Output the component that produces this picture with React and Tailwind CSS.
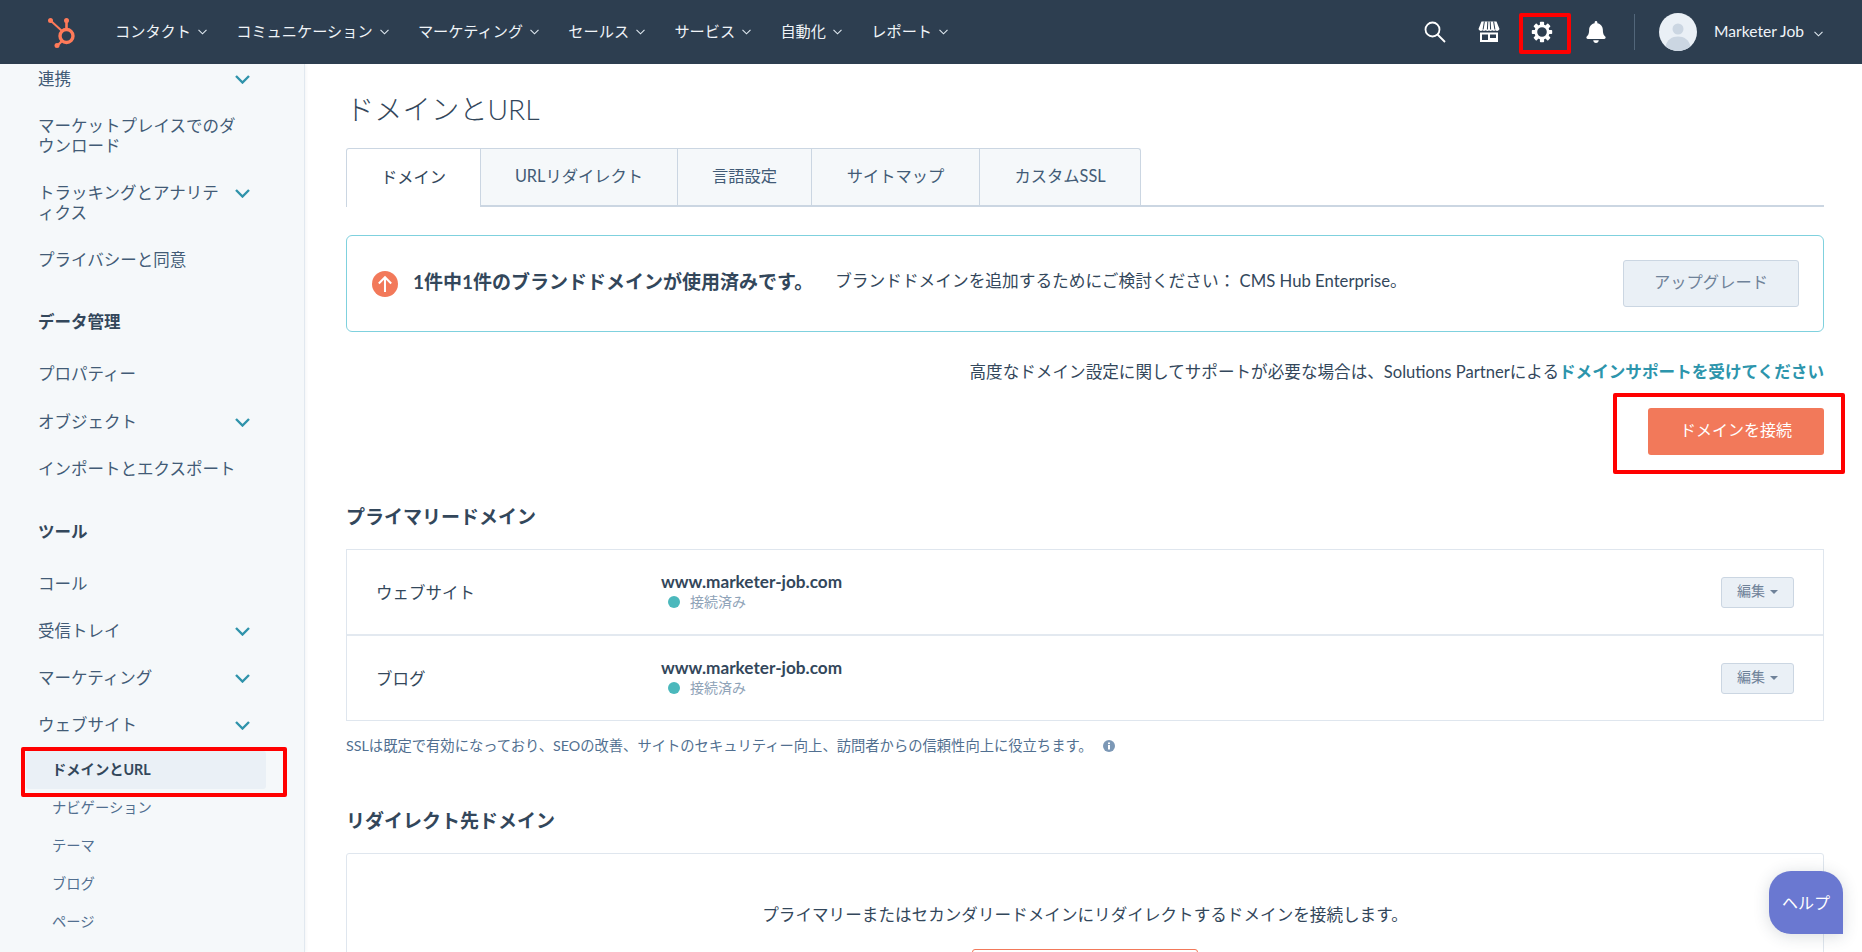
import React from "react";
import { FaBell } from "react-icons/fa";

const NavChevron = () => (
  <svg width="9" height="6" viewBox="0 0 9 6" className="ml-[7px] mt-[3px]" fill="none" stroke="#dfe8f0" strokeWidth="1.1"><path d="M.5.8l4 4 4-4" /></svg>
);
const SideChevron = () => (
  <svg width="15" height="9" viewBox="0 0 15 9" fill="none" stroke="#2f93ab" strokeWidth="2.4" className="shrink-0 mt-[1px]"><path d="M1 1l6.5 6.5L14 1" /></svg>
);
const Logo = () => (
  <svg width="32" height="32" viewBox="0 0 32 32" fill="none" className="shrink-0">
    <g stroke="#ff7a59">
      <circle cx="20.5" cy="20" r="6.5" strokeWidth="3.4" />
      <path d="M20.5 4v9" strokeWidth="2.6" />
      <path d="M5 5l11 10" strokeWidth="2" />
      <path d="M16 25l-4.500 4.500" strokeWidth="2.4" />
    </g>
    <g fill="#ff7a59">
      <circle cx="20.500" cy="4.500" r="2.500" />
      <circle cx="4.500" cy="4.500" r="2.500" />
      <circle cx="11" cy="29.500" r="2.500" />
    </g>
  </svg>
);
const SearchIcon = () => (
  <svg width="22" height="22" viewBox="0 0 22 22" fill="none" stroke="#fff" strokeWidth="1.800" className="shrink-0">
    <circle cx="8.500" cy="8.500" r="7" />
    <path d="M13.500 13.500L21 21" />
  </svg>
);
const Gear = () => (
  <svg width="22" height="22" viewBox="0 0 22 22" className="shrink-0">
    <g fill="#fff">
      {[0, 45, 90, 135, 180, 225, 270, 315].map((a) => (
        <rect key={a} x="8.900" y="0.800" width="4.200" height="4.500" rx="0.800" transform={`rotate(${a} 11 11)`} />
      ))}
    </g>
    <circle cx="11" cy="11" r="6.200" fill="none" stroke="#fff" strokeWidth="2.800" />
  </svg>
);
const Store = () => (
  <svg width="24" height="24" viewBox="0 0 24 24" fill="#fff" className="shrink-0">
    <path d="M4.500 1.500h15l3 7.500a2.400 2.400 0 0 1-4 1.200 2.700 2.700 0 0 1-3.250 0 2.700 2.700 0 0 1-3.250.300 2.700 2.700 0 0 1-3.250-.300 2.700 2.700 0 0 1-3.250 0 2.400 2.400 0 0 1-4-1.200z" />
    <path d="M7.400 1.500l-1.300 8M10.800 1.500l-.4 8M13.200 1.500l.4 8M16.600 1.500l1.300 8" stroke="#2f3f50" strokeWidth="1" />
    <path d="M3 12.500h18v9.500H3zM5 14.500v5.500h6v-5.500zM13 14.500v3.500h6v-3.500z" fillRule="evenodd" />
  </svg>
);
const Avatar = () => (
  <svg width="38" height="38" viewBox="0 0 38 38" className="shrink-0">
    <circle cx="19" cy="19" r="19" fill="#eaf0f6" />
    <circle cx="19" cy="16" r="5.500" fill="#cbd6e2" />
    <path d="M6.500 33.500c1.500-7 6.500-10 12.500-10s11 3 12.500 10a19 19 0 0 1-25 0z" fill="#cbd6e2" />
  </svg>
);

function SideItem({ label, chevron }) {
  return (
    <div className="flex items-start justify-between py-[13.5px] pl-[38px] pr-[54px] text-[16.5px] leading-[20px] text-[#425b76]">
      <span className={`[line-break:anywhere] ${chevron ? "w-[190px]" : "w-[199px]"}`}>{label}</span>
      {chevron && <span className="flex h-[20px] items-center"><SideChevron /></span>}
    </div>
  );
}
const SideHeader = ({ label, top }) => (
  <div className={`${top} mb-[5px] py-[13.500px] pl-[38px] text-[16.5px] font-bold leading-[20px] text-[#33475b]`}>{label}</div>
);
const SubItem = ({ label, active }) => (
  <div className={`ml-[26px] mr-[38px] flex h-[38px] items-center rounded-[3px] pl-[26px] text-[14.3px] ${active ? "bg-[#eaf0f6] font-bold text-[#33475b]" : "text-[#516f90]"}`}>{label}</div>
);

function DomainRow({ label, last }) {
  return (
    <div className={`flex items-center pl-[29px] pr-[29px] ${last ? "h-[84px]" : "h-[86px] border-b-2 border-[#e3e9f0]"}`}>
      <span className="mt-[2px] w-[285px] text-[16.5px] text-[#33475b]">{label}</span>
      <div className="flex flex-col">
        <span className="text-[17.2px] font-bold leading-[20px] text-[#33475b]">www.marketer-job.com</span>
        <span className="flex items-center pl-[7px] text-[14px] leading-[20px] text-[#8fa3b8]">
          <span className="mr-[10px] h-[12px] w-[12px] rounded-full bg-[#4bb8bc]" />接続済み
        </span>
      </div>
      <button className="ml-auto flex h-[31px] w-[73px] items-center justify-center rounded-[3px] border border-[#cbd6e2] bg-[#eaf0f6] pb-[3px] text-[14px] text-[#6f8299]">
        編集
        <span className="ml-[5px] mt-[3px] h-0 w-0 border-x-[4px] border-t-[4px] border-x-transparent border-t-[#6f8299]" />
      </button>
    </div>
  );
}

const NAV = ["コンタクト", "コミュニケーション", "マーケティング", "セールス", "サービス", "自動化", "レポート"];
const TABS = [["ドメイン", "w-[135px]"], ["URLリダイレクト", "w-[197px]"], ["言語設定", "w-[134px]"], ["サイトマップ", "w-[168px]"], ["カスタムSSL", "w-[161px]"]];

export default function App() {
  return (
    <div className="relative flex h-[952px] w-[1862px] flex-col overflow-hidden bg-white font-['Lato','Noto_Sans_CJK_JP',sans-serif] text-[#33475b]">
      <header className="flex h-[64px] shrink-0 items-center bg-[#2d3e50] pl-[46px] pr-[39px] text-white">
        <Logo />
        <nav className="ml-[37px] flex gap-[29.3px]">
          {NAV.map((n) => (
            <span key={n} className="flex items-center pb-[2px] text-[15.2px] text-[#f0f4f8]">{n}<NavChevron /></span>
          ))}
        </nav>
        <div className="ml-auto flex items-center">
          <SearchIcon />
          <span className="ml-[31px]"><Store /></span>
          <span className="ml-[29px] flex w-[23px] justify-center"><Gear /></span>
          <span className="ml-[31px] flex w-[23px] justify-center"><FaBell size={22} color="#fff" /></span>
          <span className="ml-[27px] h-[36px] w-px bg-[#52667a]" />
          <span className="ml-[24px]"><Avatar /></span>
          <span className="ml-[17px] text-[15.6px] text-[#f0f4f8]">Marketer Job</span>
          <span className="ml-[3px] flex"><NavChevron /></span>
        </div>
      </header>

      <div className="flex min-h-0 flex-1">
        <aside className="w-[305px] shrink-0 overflow-hidden border-r border-[#e1e8ef] bg-[#f5f8fa] shadow-[1px_0_3px_rgba(45,62,80,0.06)]">
          <div className="mt-[-8.5px]">
            <SideItem label="連携" chevron />
            <SideItem label="マーケットプレイスでのダウンロード" />
            <SideItem label="トラッキングとアナリティクス" chevron />
            <SideItem label="プライバシーと同意" />
            <SideHeader label="データ管理" top="mt-[15px]" />
            <SideItem label="プロパティー" />
            <div className="mt-[1px]">
              <SideItem label="オブジェクト" chevron />
              <SideItem label="インポートとエクスポート" />
              <SideHeader label="ツール" top="mt-[16px]" />
              <SideItem label="コール" />
              <SideItem label="受信トレイ" chevron />
              <SideItem label="マーケティング" chevron />
              <SideItem label="ウェブサイト" chevron />
            </div>
            <div className="mt-[2px]">
              <SubItem label="ドメインとURL" active />
              <SubItem label="ナビゲーション" />
              <SubItem label="テーマ" />
              <SubItem label="ブログ" />
              <SubItem label="ページ" />
            </div>
          </div>
        </aside>

        <main className="min-w-0 flex-1 overflow-hidden pl-[41px] pr-[38px] pt-[25px]">
          <h1 className="text-[28.3px] font-light leading-[40px] text-[#33475b]">ドメインとURL</h1>

          <div className="mt-[19px] flex h-[59px] border-b-2 border-[#cbd6e2]">
            {TABS.map(([t, w], i) => (
              <div key={t} className={`${w} flex items-center justify-center border-r border-t border-[#cbd6e2] pb-[2px] text-[16.3px] ${i === 0 ? "h-[59px] rounded-tl-[3px] border-l bg-white text-[#33475b]" : "bg-[#f5f8fa] text-[#425b76]"} ${i === 4 ? "rounded-tr-[3px]" : ""}`}>{t}</div>
            ))}
          </div>

          <section className="mt-[28px] flex h-[97px] items-center rounded-[6px] border border-[#7fd1de] pl-[25px] pr-[24px]">
            <span className="flex h-[26px] w-[26px] items-center justify-center rounded-full bg-[#f2795a]">
              <svg width="16" height="18" viewBox="0 0 14 16" fill="none" stroke="#fff" strokeWidth="1.800"><path d="M7 15V2M1.500 7.500L7 2l5.500 5.500" /></svg>
            </span>
            <strong className="mb-[3px] ml-[15px] text-[19px] font-bold">1件中1件のブランドドメインが使用済みです。</strong>
            <span className="mb-[3px] ml-[22px] text-[16.7px] text-[#33475b]">ブランドドメインを追加するためにご検討ください： CMS Hub Enterprise。</span>
            <button className="ml-auto h-[47px] w-[176px] rounded-[3px] border border-[#cbd6e2] bg-[#eaf0f6] pb-[3px] text-[16.3px] text-[#6f8299]">アップグレード</button>
          </section>

          <p className="mt-[28px] text-right text-[16.6px] leading-[24px] text-[#33475b]">
            高度なドメイン設定に関してサポートが必要な場合は、Solutions Partnerによる<b className="font-bold text-[#2d95ac]">ドメインサポートを受けてください</b>
          </p>

          <div className="mt-[24px] flex justify-end">
            <button className="h-[47px] w-[176px] rounded-[3px] bg-[#f2795a] pb-[3px] text-[16px] text-white">ドメインを接続</button>
          </div>

          <h2 className="mt-[49px] text-[19px] font-bold leading-[26px]">プライマリードメイン</h2>
          <div className="mt-[19px] border border-[#dfe6ee]">
            <DomainRow label="ウェブサイト" />
            <DomainRow label="ブログ" last />
          </div>

          <p className="mt-[15px] flex items-center text-[14.3px] leading-[20px] text-[#516f90]">
            SSLは既定で有効になっており、SEOの改善、サイトのセキュリティー向上、訪問者からの信頼性向上に役立ちます。
            <svg width="12" height="12" viewBox="0 0 12 12" className="ml-[10px]"><circle cx="6" cy="6" r="6" fill="#7c98b6" /><rect x="5" y="5" width="2" height="4.500" fill="#fff" /><rect x="5" y="2.500" width="2" height="1.600" fill="#fff" /></svg>
          </p>

          <h2 className="mt-[52px] text-[19px] font-bold leading-[26px]">リダイレクト先ドメイン</h2>
          <div className="mt-[19px] flex flex-col items-center rounded-t-[3px] border border-[#dfe6ee] pt-[49px]">
            <p className="text-[16.6px] leading-[24px] text-[#33475b]">プライマリーまたはセカンダリードメインにリダイレクトするドメインを接続します。</p>
            <div className="mt-[22px] h-[47px] w-[226px] rounded-[3px] border border-[#f2795a] bg-white" />
          </div>
        </main>
      </div>

      {/* annotation boxes that sit over the page */}
      <div className="absolute left-[1519px] top-[13px] h-[41px] w-[52px] rounded-[2px] border-[4px] border-[#ff0000]" />
      <div className="absolute left-[1613px] top-[393px] h-[81px] w-[232px] rounded-[2px] border-[4px] border-[#ff0000]" />
      <div className="absolute left-[21px] top-[747px] h-[50px] w-[266px] rounded-[2px] border-[4px] border-[#ff0000]" />

      <button className="absolute left-[1769px] top-[871px] h-[63px] w-[74px] rounded-t-[22px] rounded-bl-[22px] bg-[#6a78d1] text-[16px] text-white shadow-[0_2px_16px_rgba(45,62,80,0.18)]">ヘルプ</button>
    </div>
  );
}
